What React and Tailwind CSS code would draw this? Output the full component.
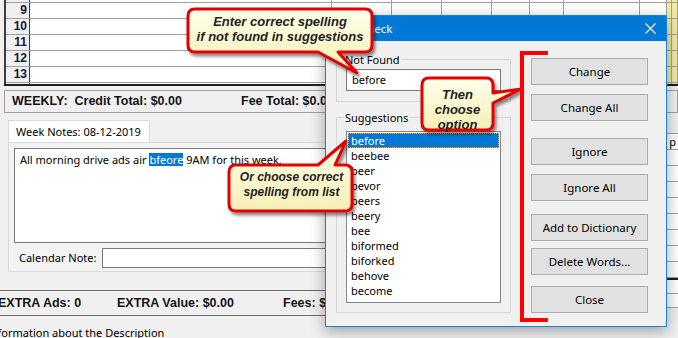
import React from 'react';

const gridCols = [
  'w-[302px] bg-white',
  'w-[60px] bg-white',
  'w-[50px] bg-white',
  'w-[50px] bg-white',
  'w-[38px] bg-white',
  'w-[34px] bg-white',
  'w-[76px] bg-white',
  'w-[27px] bg-white',
  'w-[5px] bg-[#f1e9a6]',
  'flex-1 bg-[#f1e9a6]',
];

const suggestions = ['before', 'beebee', 'beer', 'bevor', 'beers', 'beery', 'bee', 'biformed', 'biforked', 'behove', 'become'];

const Grid = () => {
  const rows = [8, 9, 10, 11, 12, 13, 14];
  return (
    <div className="h-[86px] overflow-hidden border-b-2 border-[#1e1e1e] ml-[4px]">
      <div className="-mt-[13px] border-l-2 border-[#3c3c3c]">
        {rows.map((n) => (
          <div key={n} className="flex h-[16px] border-b border-[#a0a0a0]">
            <div className="w-[24px] shrink-0 bg-[#f0f0f0] border-r border-[#3c3c3c] text-right pr-[2px] font-['Liberation_Sans',sans-serif] font-bold text-[12px] leading-[15px] text-[#101838]">
              {n}
            </div>
            {gridCols.map((c, i) => (
              <div key={i} className={`shrink-0 border-r border-[#a0a0a0] ${c}`} />
            ))}
          </div>
        ))}
      </div>
    </div>
  );
};

const RightStrip = () => (
  <div className="flex-1 mt-[20px]">
    <div className="bg-white border-t border-[#a0a0a0] h-[17px] border-b pl-[2px] text-[11px] leading-[16px]">' p</div>
    {[0, 1, 2, 3, 4, 5, 6, 7].map((i) => (
      <div key={i} className="bg-white h-[16px] border-b border-[#a0a0a0]" />
    ))}
    <div className="h-[2px] bg-[#1e1e1e]" />
    {[0, 1].map((i) => (
      <div key={i} className="bg-white h-[14px] border-b border-[#a0a0a0]" />
    ))}
  </div>
);

const Background = () => (
  <div>
    <Grid />
    <div className="mt-[4px] ml-[4px] h-[23px] border border-[#a0a0a0] flex items-center pl-[7px] font-['Liberation_Sans',sans-serif] font-bold text-[12.5px] text-[#141414]">
      <span className="w-[229px] whitespace-pre">WEEKLY:  Credit Total: $0.00</span>
      <span>Fee Total: $0.00</span>
    </div>
    <div className="flex">
      <div className="w-[662px] shrink-0">
        <div className="mt-[7px] ml-[8px] w-[142px] h-[22px] bg-white border border-b-0 border-[#d9d9d9] pl-[7px] leading-[21px] text-[11px]">
          Week Notes: 08-12-2019
        </div>
        <div className="ml-[8px] h-[130px] border border-[#d9d9d9] bg-[#f3f3f3]">
          <div className="ml-[5px] mt-[5px] h-[95px] bg-white border border-[#7a7a7a] pl-[5px] pt-[3px] text-[11px] leading-[15px]">
            All morning drive ads air{' '}
            <span className="inline-block bg-[#0078d7] text-white leading-[13px]">bfeore</span> 9AM for this week.
          </div>
          <div className="flex items-center mt-[5px]">
            <span className="ml-[10px] w-[83px] text-[11px]">Calendar Note:</span>
            <div className="flex-1 h-[20px] bg-white border border-[#7a7a7a]" />
          </div>
        </div>
        <div className="mt-[18px] h-[26px] border-t border-b border-[#6d6d6d] flex items-center font-['Liberation_Sans',sans-serif] font-bold text-[12.5px] text-[#141414]">
          <span className="ml-[-2px] w-[119px] shrink-0">EXTRA Ads: 0</span>
          <span className="w-[166px] shrink-0">EXTRA Value: $0.00</span>
          <span>Fees: $0.00</span>
        </div>
        <div className="mt-[9px] ml-[-13px] text-[11px] leading-[15px] whitespace-nowrap">Information about the Description</div>
      </div>
      <RightStrip />
    </div>
  </div>
);

const Button = ({ label, mt }) => (
  <div className={`h-[27px] shrink-0 bg-[#e1e1e1] border border-[#adadad] flex items-center justify-center text-[11.5px] ${mt}`}>
    {label}
  </div>
);

const Dialog = () => (
  <div className="absolute left-[325px] top-[15px] w-[342px] h-[312px] bg-[#f0f0f0] border border-[#1883d7] shadow-[0_4px_14px_rgba(0,0,0,0.35)] flex flex-col">
    <div className="h-[25px] shrink-0 bg-[#0078d7] flex items-center justify-between text-white">
      <span className="pl-[5px] text-[11.5px]">Spell Check</span>
      <span className="w-[32px] h-full flex items-center justify-center">
        <svg width="11" height="11" viewBox="0 0 11 11">
          <path d="M0.5 0.5 L10.5 10.5 M10.5 0.5 L0.5 10.5" stroke="#ffffff" strokeWidth="1.1" fill="none" />
        </svg>
      </span>
    </div>
    <div className="flex pl-[10px]">
      <div className="w-[175px] shrink-0 pt-[11px]">
        <fieldset className="border border-[#d5d5d5] pb-[10px]">
          <legend className="ml-[7px] px-[1px] leading-[15px] text-[11px]">Not Found</legend>
          <div className="mt-[2px] ml-[9px] w-[155px] h-[22px] bg-white border border-[#7a7a7a] pl-[5px] text-[11px] leading-[20px]">
            before
          </div>
        </fieldset>
        <fieldset className="mt-[8px] border border-[#d5d5d5] pb-[9px]">
          <legend className="ml-[7px] px-[1px] leading-[15px] text-[11px]">Suggestions</legend>
          <div className="mt-[6px] ml-[9px] w-[155px] h-[172px] bg-white border border-[#828790] p-px">
            {suggestions.map((s, i) => (
              <div
                key={s}
                className={`h-[15px] pl-[2px] text-[11px] leading-[14px] ${
                  i === 0 ? 'bg-[#0078d7] text-white border border-dotted border-[#f5a54a]' : 'border border-transparent'
                }`}
              >
                {s}
              </div>
            ))}
          </div>
        </fieldset>
      </div>
      <div className="ml-[20px] w-[117px] shrink-0 flex flex-col">
        <Button label="Change" mt="mt-[17px]" />
        <Button label="Change All" mt="mt-[9px]" />
        <Button label="Ignore" mt="mt-[17px]" />
        <Button label="Ignore All" mt="mt-[9px]" />
        <Button label="Add to Dictionary" mt="mt-[13px]" />
        <Button label="Delete Words..." mt="mt-[7px]" />
        <Button label="Close" mt="mt-[11px]" />
      </div>
    </div>
  </div>
);

const Callouts = () => (
  <>
    <svg className="absolute inset-0 pointer-events-none" width="678" height="338" viewBox="0 0 678 338">
      <defs>
        <linearGradient id="cf" x1="0" y1="0" x2="0" y2="1">
          <stop offset="0" stopColor="#ffffea" />
          <stop offset="1" stopColor="#f7efb6" />
        </linearGradient>
        <filter id="cs" x="-10%" y="-10%" width="130%" height="140%">
          <feDropShadow dx="2" dy="3" stdDeviation="1.6" floodColor="#000" floodOpacity="0.45" />
        </filter>
      </defs>
      <g fill="url(#cf)" stroke="#e40000" strokeWidth="3" strokeLinejoin="round" filter="url(#cs)">
        <path d="M195 9 H365 Q372 9 372 16 V45 Q372 52 365 52 H338 L357 73 L318 52 H195 Q188 52 188 45 V16 Q188 9 195 9 Z" />
        <path d="M429 78 H486 Q493 78 493 85 V93 L521 89 L493 103 V123 Q493 130 486 130 H429 Q422 130 422 123 V85 Q422 78 429 78 Z" />
        <path d="M236 165 H318 L346 141 L335 165 H345 Q352 165 352 172 V204 Q352 211 345 211 H236 Q229 211 229 204 V172 Q229 165 236 165 Z" />
      </g>
    </svg>
    <div className="absolute left-[188px] top-[14px] w-[184px] text-center font-['Liberation_Sans',sans-serif] font-bold italic text-[13px] leading-[15px] text-[#1e1e1e]">
      Enter correct spelling
      <br />
      if not found in suggestions
    </div>
    <div className="absolute left-[422px] top-[87px] w-[71px] text-center font-['Liberation_Sans',sans-serif] font-bold italic text-[13px] leading-[15px] text-[#1e1e1e]">
      Then
      <br />
      choose
      <br />
      option
    </div>
    <div className="absolute left-[231px] top-[170px] w-[121px] text-center font-['Liberation_Sans',sans-serif] font-bold italic text-[12px] leading-[15px] text-[#1e1e1e]">
      Or choose correct
      <br />
      spelling from list
    </div>
    <div className="absolute left-[520px] top-[51px] w-[28px] h-[271px] border-l-4 border-t-4 border-b-4 border-[#ff0000]" />
  </>
);

export default function App() {
  return (
    <div className="relative w-[678px] h-[338px] overflow-hidden bg-[#f0f0f0] font-['Noto_Sans',sans-serif] text-black">
      <Background />
      <Dialog />
      <Callouts />
    </div>
  );
}
